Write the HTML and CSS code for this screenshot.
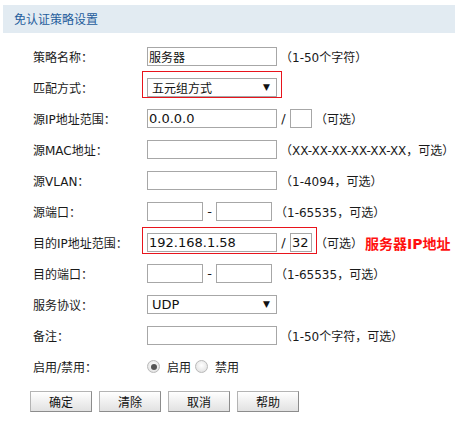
FILE: index.html
```html
<!DOCTYPE html>
<html lang="zh-CN">
<head>
<meta charset="utf-8">
<title>免认证策略设置</title>
<link rel="stylesheet" href="styles.css">
</head>
<body>
<div class="page">
  <div class="title">免认证策略设置</div>
  <div class="form">
    <div class="row">
      <span class="lbl">策略名称：</span>
      <span class="box w130 cjk">服务器</span>
      <span class="hint">（1-50个字符）</span>
    </div>
    <div class="row">
      <span class="lbl">匹配方式：</span>
      <span class="box w130 sel cjk">五元组方式<span class="arrow">▼</span></span>
    </div>
    <div class="row">
      <span class="lbl">源IP地址范围：</span>
      <span class="box w130">0.0.0.0</span>
      <span class="sep">/</span>
      <span class="box w22"></span>
      <span class="hint">（可选）</span>
    </div>
    <div class="row">
      <span class="lbl">源MAC地址：</span>
      <span class="box w130"></span>
      <span class="hint">（XX-XX-XX-XX-XX-XX，可选）</span>
    </div>
    <div class="row">
      <span class="lbl">源VLAN：</span>
      <span class="box w130"></span>
      <span class="hint">（1-4094，可选）</span>
    </div>
    <div class="row">
      <span class="lbl">源端口：</span>
      <span class="box w56"></span>
      <span class="sep">-</span>
      <span class="box w56"></span>
      <span class="hint">（1-65535，可选）</span>
    </div>
    <div class="row">
      <span class="lbl">目的IP地址范围：</span>
      <span class="box w130">192.168.1.58</span>
      <span class="sep">/</span>
      <span class="box w22">32</span>
      <span class="hint">（可选）</span>
      <span class="note">服务器IP地址</span>
    </div>
    <div class="row">
      <span class="lbl">目的端口：</span>
      <span class="box w56"></span>
      <span class="sep">-</span>
      <span class="box w56"></span>
      <span class="hint">（1-65535，可选）</span>
    </div>
    <div class="row">
      <span class="lbl">服务协议：</span>
      <span class="box w130 sel">UDP<span class="arrow">▼</span></span>
    </div>
    <div class="row">
      <span class="lbl">备注：</span>
      <span class="box w130"></span>
      <span class="hint">（1-50个字符，可选）</span>
    </div>
    <div class="row">
      <span class="lbl">启用/禁用：</span>
      <span class="radio on"></span><span class="rtext">启用</span>
      <span class="radio"></span><span class="rtext">禁用</span>
    </div>
    <div class="buttons">
      <span class="btn">确定</span>
      <span class="btn">清除</span>
      <span class="btn">取消</span>
      <span class="btn">帮助</span>
    </div>
  </div>
  <div class="mark mark1"></div>
  <div class="mark mark2"></div>
</div>
</body>
</html>
```
FILE: styles.css
```css
html, body {
  margin: 0;
  padding: 0;
  background: #ffffff;
}
body {
  font-family: "DejaVu Sans", "Noto Sans CJK SC", sans-serif;
  font-size: 12px;
  color: #1a1a1a;
}
.page {
  position: relative;
  width: 455px;
  height: 422px;
  overflow: hidden;
}
.title {
  margin: 5px 0 0 3px;
  height: 28px;
  line-height: 27px;
  padding-left: 11px;
  background: #e2ebf2;
  color: #1f5d9c;
  font-family: "Noto Sans CJK SC", sans-serif;
  font-size: 12px;
}
.form {
  padding-top: 8px;
}
.row {
  display: flex;
  align-items: center;
  height: 31px;
  padding-left: 33px;
}
.lbl {
  width: 114px;
  flex: none;
  font-size: 12px;
}
.box {
  box-sizing: border-box;
  height: 19px;
  border: 1px solid #a7a7a7;
  background: #fff;
  display: flex;
  align-items: center;
  padding-left: 1px;
  font-size: 13px;
  color: #111;
  flex: none;
  overflow: hidden;
  white-space: nowrap;
}
.box.cjk {
  font-size: 12px;
  font-family: "Noto Sans CJK SC", sans-serif;
}
.w130 { width: 130px; }
.w56 { width: 56px; }
.w22 { width: 22px; }
.sel {
  position: relative;
  padding-left: 4px;
}
.arrow {
  position: absolute;
  right: 6px;
  top: 2px;
  font-size: 9px;
  line-height: 13px;
  color: #111;
  font-family: "DejaVu Sans", sans-serif;
}
.sep {
  width: 13px;
  text-align: center;
  flex: none;
  font-size: 13px;
}
.hint {
  margin-left: 3px;
  white-space: nowrap;
}
.note {
  margin-left: 2px;
  color: #ff1010;
  font-weight: bold;
  font-size: 14px;
  white-space: nowrap;
}
.radio {
  box-sizing: border-box;
  width: 13px;
  height: 13px;
  border-radius: 50%;
  border: 1px solid #b9b9b9;
  background: radial-gradient(circle at 50% 40%, #ffffff 0%, #e6e6e6 70%, #d4d4d4 100%);
  flex: none;
  position: relative;
}
.radio.on::after {
  content: "";
  position: absolute;
  left: 2.5px;
  top: 2.5px;
  width: 6px;
  height: 6px;
  border-radius: 50%;
  background: #555;
}
.rtext {
  margin: 0 4px 0 7px;
}
.buttons {
  display: flex;
  gap: 7px;
  padding: 9px 0 0 30px;
}
.btn {
  box-sizing: border-box;
  width: 62px;
  height: 21px;
  border: 1px solid #b4b4b4;
  border-right-color: #8c8c8c;
  border-bottom-color: #8c8c8c;
  background: linear-gradient(#ffffff, #ededed 60%, #e2e2e2);
  display: flex;
  align-items: center;
  justify-content: center;
  font-family: "Noto Sans CJK SC", sans-serif;
  font-size: 12px;
  color: #111;
}
.mark {
  position: absolute;
  border: 1px solid #e8141c;
  box-sizing: border-box;
}
.mark1 {
  left: 142px;
  top: 71px;
  width: 140px;
  height: 27px;
}
.mark2 {
  left: 142px;
  top: 227px;
  width: 175px;
  height: 27px;
}
```
